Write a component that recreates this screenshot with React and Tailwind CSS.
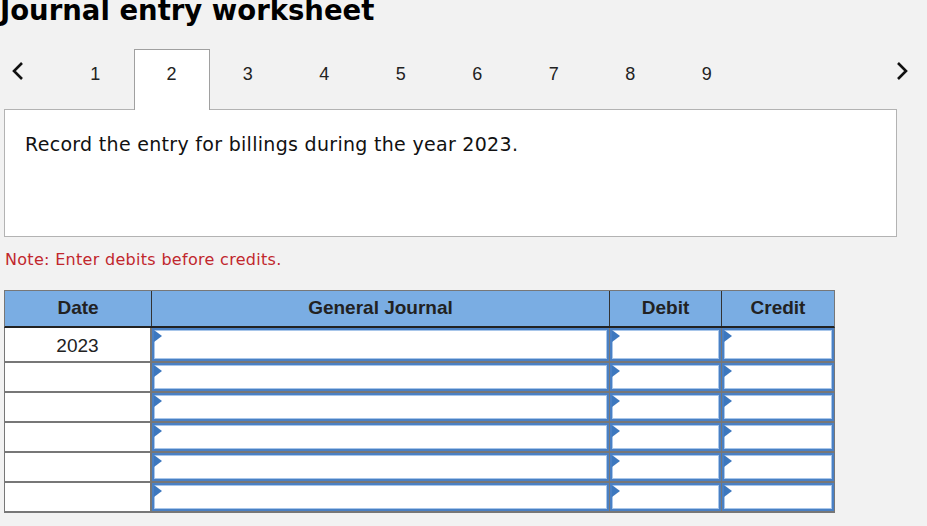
import React from 'react';

const tabs = [1, 2, 3, 4, 5, 6, 7, 8, 9];
const rows = ['2023', '', '', '', '', ''];

function Chevron({ dir }) {
  return (
    <svg width="14" height="20" viewBox="0 0 14 20" fill="none">
      {dir === 'left'
        ? <path d="M11 2 L3 10 L11 18" stroke="#111" strokeWidth="2.6" />
        : <path d="M3 2 L11 10 L3 18" stroke="#111" strokeWidth="2.6" />}
    </svg>
  );
}

function InputCell() {
  return (
    <div className="relative h-full border-2 border-[#4a80c4] bg-white">
      <div className="h-full border border-[#a8c6ea]" />
      <div className="absolute left-0 top-0 w-0 h-0 border-y-[6px] border-y-transparent border-l-[8px] border-l-[#3d78bf]" />
    </div>
  );
}

export default function App() {
  return (
    <div className="w-[927px] h-[526px] overflow-hidden bg-[#f2f2f2] text-[#222]" style={{ fontFamily: '"Liberation Sans", Arial, sans-serif' }}>
      <h1 className="-mt-[8px] h-[40px] text-[27.5px] font-bold leading-[37px] text-black" style={{ fontFamily: '"DejaVu Sans", Verdana, sans-serif' }}>
        Journal entry worksheet
      </h1>

      <div className="mt-[17px] flex h-[60px] items-start">
        <div className="flex w-[57px] pl-[11px] pt-[12px]"><Chevron dir="left" /></div>
        {tabs.map(t => (
          <div
            key={t}
            className={t === 2
              ? 'relative z-10 h-[61px] w-[76px] border border-b-0 border-[#a0a0a0] bg-white pt-[11px] text-center text-[18px]'
              : 'h-[60px] w-[76.5px] pt-[12px] text-center text-[18px]'}
          >
            {t}
          </div>
        ))}
        <div className="ml-auto mr-[18px] pt-[12px]"><Chevron dir="right" /></div>
      </div>

      <div className="ml-[4px] h-[128px] w-[893px] border border-[#b3b3b3] bg-white pl-[20px] pt-[20px] text-[19px] tracking-[0.3px] text-[#111]" style={{ fontFamily: '"DejaVu Sans", Verdana, sans-serif' }}>
        Record the entry for billings during the year 2023.
      </div>

      <div className="ml-[5px] mt-[11px] text-[16px] tracking-[0.3px] text-[#c1272d]" style={{ fontFamily: '"DejaVu Sans", Verdana, sans-serif' }}>
        Note: Enter debits before credits.
      </div>

      <div className="ml-[4px] mt-[18px] w-[831px]">
        <div className="grid h-[38px] grid-cols-[147px_458px_112px_112px] border border-b-2 border-[#777] border-b-[#222] bg-[#7aade3] text-[19px] font-bold">
          <div className="flex items-center justify-center border-r border-[#333]">Date</div>
          <div className="flex items-center justify-center border-r border-[#333]">General Journal</div>
          <div className="flex items-center justify-center border-r border-[#333]">Debit</div>
          <div className="flex items-center justify-center">Credit</div>
        </div>
        {rows.map((d, i) => (
          <div key={i} className={`grid grid-cols-[147px_458px_112px_112px] border-x border-b-2 border-[#777] ${i === 0 ? 'h-[35px]' : 'h-[30px]'}`}>
            <div className="flex items-start justify-center border-r-2 border-[#777] bg-white pt-[4px] text-[19px]">{d}</div>
            <div className="border-r border-[#777]"><InputCell /></div>
            <div className="border-r border-[#777]"><InputCell /></div>
            <div><InputCell /></div>
          </div>
        ))}
      </div>
    </div>
  );
}
